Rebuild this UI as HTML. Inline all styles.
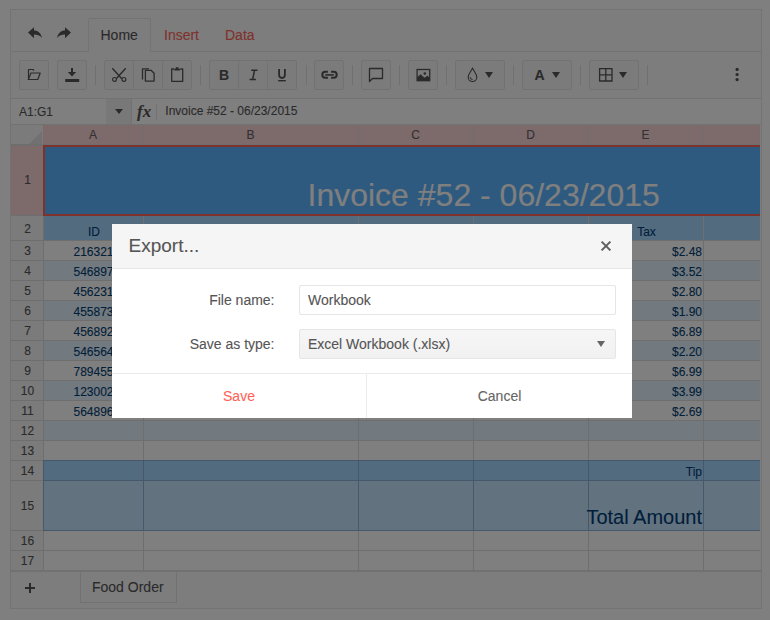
<!DOCTYPE html><html><head><meta charset="utf-8"><style>
*{box-sizing:border-box;margin:0;padding:0}
html,body{width:770px;height:620px;overflow:hidden;background:#fff;font-family:"Liberation Sans",sans-serif}
.abs{position:absolute}
#ss{position:absolute;left:10px;top:9px;width:752px;height:600px;border:1px solid #e6e6e6;background:#fafafa}
.tb{position:absolute;border:1px solid #e4e4e4;background:#f6f6f6;border-radius:2px}
.sep{position:absolute;width:1px;background:#e0e0e0;top:65px;height:20px}
.gl{position:absolute;background:#dcdcdc}
.txt{position:absolute;white-space:nowrap;line-height:1;-webkit-text-stroke:0.1px currentColor}
#ov{position:absolute;left:0;top:0;width:770px;height:620px;background:rgba(0,0,0,0.5)}
</style></head><body>
<div id="ss"></div>
<div class="abs" style="left:11px;top:51px;width:77px;height:1px;background:#e4e4e4"></div>
<div class="abs" style="left:151px;top:51px;width:610px;height:1px;background:#e4e4e4"></div>
<div class="abs" style="left:88px;top:18px;width:63px;height:34px;border:1px solid #e6e6e6;border-bottom:none;border-radius:2px 2px 0 0;background:#fafafa"></div>
<div class="txt" style="left:100.5px;top:28px;font-size:14px;color:#555">Home</div>
<div class="txt" style="left:164px;top:28px;font-size:14px;color:#ff6358">Insert</div>
<div class="txt" style="left:225px;top:28px;font-size:14px;color:#ff6358">Data</div>
<svg class="abs" style="left:27px;top:26px" width="16" height="14" viewBox="0 0 16 14"><path d="M1 6.5 L7 1.3 L7 4.6 C11 4.6 14 7.2 15 12 C13 9.3 10 8.6 7 8.6 L7 12.3 Z" fill="#555"/></svg>
<svg class="abs" style="left:56px;top:26px" width="16" height="14" viewBox="0 0 16 14"><path d="M15 6.5 L9 1.3 L9 4.6 C5 4.6 2 7.2 1 12 C3 9.3 6 8.6 9 8.6 L9 12.3 Z" fill="#555"/></svg>
<div class="abs" style="left:11px;top:98px;width:750px;height:1px;background:#e4e4e4"></div>
<div class="tb" style="left:19px;top:60px;width:30px;height:30px"></div>
<div class="tb" style="left:57px;top:60px;width:30px;height:30px"></div>
<div class="tb" style="left:104px;top:60px;width:88px;height:30px"></div>
<div class="tb" style="left:209px;top:60px;width:88px;height:30px"></div>
<div class="tb" style="left:314px;top:60px;width:30px;height:30px"></div>
<div class="tb" style="left:361px;top:60px;width:30px;height:30px"></div>
<div class="tb" style="left:408px;top:60px;width:30px;height:30px"></div>
<div class="tb" style="left:455px;top:60px;width:50px;height:30px"></div>
<div class="tb" style="left:522px;top:60px;width:50px;height:30px"></div>
<div class="tb" style="left:589px;top:60px;width:50px;height:30px"></div>
<div class="abs" style="left:133px;top:61px;width:1px;height:28px;background:#e4e4e4"></div>
<div class="abs" style="left:162px;top:61px;width:1px;height:28px;background:#e4e4e4"></div>
<div class="abs" style="left:238px;top:61px;width:1px;height:28px;background:#e4e4e4"></div>
<div class="abs" style="left:267px;top:61px;width:1px;height:28px;background:#e4e4e4"></div>
<div class="sep" style="left:95px"></div>
<div class="sep" style="left:200px"></div>
<div class="sep" style="left:306px"></div>
<div class="sep" style="left:352px"></div>
<div class="sep" style="left:399px"></div>
<div class="sep" style="left:446px"></div>
<div class="sep" style="left:513px"></div>
<div class="sep" style="left:580px"></div>
<div class="sep" style="left:647px"></div>
<svg class="abs" style="left:26px;top:68px" width="16" height="14" viewBox="0 0 16 14"><path d="M2.5 11.5V1.5h4.5l1 1" fill="none" stroke="#555" stroke-width="1.2" stroke-linejoin="round"/><path d="M5 5h9.2l-2.4 6.5H2.3z" fill="none" stroke="#555" stroke-width="1.2" stroke-linejoin="round"/></svg>
<svg class="abs" style="left:64px;top:67px" width="16" height="16" viewBox="0 0 16 16"><rect x="7" y="1" width="2" height="5" fill="#555"/><path d="M3.8 5h8.4l-4.2 4.5z" fill="#555"/><rect x="1.2" y="12" width="14" height="3" fill="#555"/></svg>
<svg class="abs" style="left:111px;top:67px" width="16" height="16" viewBox="0 0 16 16"><path d="M1.3 1.3l9.5 10.5M14.7 1.3l-9.5 10.5" stroke="#555" stroke-width="1.4"/><circle cx="3.5" cy="12.4" r="1.9" fill="#fafafa" stroke="#555" stroke-width="1.2"/><circle cx="12.9" cy="12.4" r="1.9" fill="#fafafa" stroke="#555" stroke-width="1.2"/></svg>
<svg class="abs" style="left:140px;top:67px" width="16" height="16" viewBox="0 0 16 16"><path d="M2.5 12.6V1.9h6.5" fill="none" stroke="#555" stroke-width="1.3" stroke-linejoin="round"/><path d="M5.4 3.3h5.7l3 3v7.8H5.4z" fill="none" stroke="#555" stroke-width="1.3" stroke-linejoin="round"/></svg>
<svg class="abs" style="left:169px;top:66px" width="16" height="17" viewBox="0 0 16 17"><path d="M5 3H2.7v12.4h11V3H11.3" fill="none" stroke="#555" stroke-width="1.3" stroke-linejoin="round"/><path d="M5.2 4.4h5.8V2.8H9.5V1.3h-2.8v1.5H5.2z" fill="#555"/></svg>
<div class="txt" style="left:219px;top:68px;font-size:14px;font-weight:bold;color:#555">B</div>
<svg class="abs" style="left:248px;top:68px" width="12" height="14" viewBox="0 0 12 14"><path d="M3.2 2.2h6.3M1.6 11.6h6.3M6.6 2.2l-2 9.4" fill="none" stroke="#555" stroke-width="1.5"/></svg>
<svg class="abs" style="left:276px;top:67px" width="12" height="16" viewBox="0 0 12 16"><path d="M3.1 2v5.8c0 2.2 1.2 3.2 2.9 3.2s2.9-1 2.9-3.2V2" fill="none" stroke="#555" stroke-width="1.8"/><rect x="2.2" y="13" width="7.6" height="1.4" fill="#555"/></svg>
<svg class="abs" style="left:321px;top:67px" width="17" height="16" viewBox="0 0 17 16"><path d="M6.9 4.8H4.3a3 3 0 0 0 0 6h2.6M10.1 4.8h2.6a3 3 0 0 1 0 6h-2.6" fill="none" stroke="#555" stroke-width="2"/><rect x="4.2" y="7.1" width="8.6" height="1.6" fill="#555"/></svg>
<svg class="abs" style="left:368px;top:67px" width="16" height="16" viewBox="0 0 16 16"><path d="M1.5 1.5h13v10h-10l-3 3z" fill="none" stroke="#555" stroke-width="1.3" stroke-linejoin="round"/></svg>
<svg class="abs" style="left:415px;top:67px" width="16" height="16" viewBox="0 0 16 16"><rect x="2.1" y="2.5" width="12.6" height="11.2" fill="none" stroke="#555" stroke-width="1.3"/><path d="M2 13.7V10.6L5.5 7.2 9.5 10.8 12.5 8.8 14.8 10.8V13.7z" fill="#555"/><circle cx="9.8" cy="6.5" r="1.3" fill="#555"/></svg>
<svg class="abs" style="left:466px;top:67px" width="14" height="16" viewBox="0 0 14 16"><path d="M6.5 1.3C4.8 4.6 2.2 7.2 2.2 10.2a4.3 4.3 0 0 0 8.6 0C10.8 7.2 8.2 4.6 6.5 1.3z" fill="none" stroke="#555" stroke-width="1.1"/><path d="M4.2 10.2a2.3 2.3 0 0 0 2.3 2.3" fill="none" stroke="#555" stroke-width="1"/></svg>
<svg class="abs" style="left:484.5px;top:72px" width="8" height="6" viewBox="0 0 8 6"><path d="M0 0h8l-4 6z" fill="#555"/></svg>
<div class="txt" style="left:534.5px;top:68px;font-size:14px;font-weight:bold;color:#555">A</div>
<svg class="abs" style="left:551.5px;top:72px" width="8" height="6" viewBox="0 0 8 6"><path d="M0 0h8l-4 6z" fill="#555"/></svg>
<svg class="abs" style="left:598px;top:67px" width="16" height="16" viewBox="0 0 16 16"><path d="M1.6 1.6h12.4v12.4H1.6z M7.8 1.6v12.4 M1.6 7.8h12.4" fill="none" stroke="#555" stroke-width="1.3"/></svg>
<svg class="abs" style="left:618.5px;top:72px" width="8" height="6" viewBox="0 0 8 6"><path d="M0 0h8l-4 6z" fill="#555"/></svg>
<svg class="abs" style="left:734px;top:66px" width="6" height="18" viewBox="0 0 6 18"><circle cx="3.1" cy="3.4" r="1.6" fill="#555"/><circle cx="3.1" cy="8.5" r="1.6" fill="#555"/><circle cx="3.1" cy="13.6" r="1.6" fill="#555"/></svg>
<div class="abs" style="left:11px;top:99px;width:750px;height:25px;background:#fff"></div>
<div class="abs" style="left:11px;top:124px;width:750px;height:1px;background:#e4e4e4"></div>
<div class="abs" style="left:106px;top:99px;width:25px;height:25px;background:#f0f0f0"></div>
<div class="abs" style="left:131px;top:99px;width:1px;height:25px;background:#e4e4e4"></div>
<div class="abs" style="left:156px;top:104px;width:1px;height:16px;background:#e4e4e4"></div>
<div class="txt" style="left:19px;top:106px;font-size:12px;color:#555">A1:G1</div>
<svg class="abs" style="left:115px;top:109px" width="8" height="6" viewBox="0 0 8 6"><path d="M0 0h8l-4 5z" fill="#555"/></svg>
<div class="txt" style="left:137px;top:103px;font-size:17px;font-style:italic;font-weight:bold;font-family:'Liberation Serif',serif;color:#555">fx</div>
<div class="txt" style="left:165.3px;top:105.3px;font-size:12px;color:#555">Invoice #52 - 06/23/2015</div>
<div class="abs" style="left:43px;top:145px;width:717px;height:425px;background:#fff"></div>
<div class="abs" style="left:43px;top:145px;width:717px;height:70px;background:#5eb4ff"></div>
<div class="abs" style="left:43px;top:215px;width:717px;height:25px;background:#a7d6ff"></div>
<div class="abs" style="left:43px;top:260px;width:717px;height:20px;background:#e5f3ff"></div>
<div class="abs" style="left:43px;top:300px;width:717px;height:20px;background:#e5f3ff"></div>
<div class="abs" style="left:43px;top:340px;width:717px;height:20px;background:#e5f3ff"></div>
<div class="abs" style="left:43px;top:380px;width:717px;height:20px;background:#e5f3ff"></div>
<div class="abs" style="left:43px;top:420px;width:717px;height:20px;background:#e5f3ff"></div>
<div class="abs" style="left:43px;top:460px;width:717px;height:20px;background:#a7d6ff"></div>
<div class="abs" style="left:43px;top:480px;width:717px;height:50px;background:#c7e4ff"></div>
<div class="abs" style="left:11px;top:125px;width:32px;height:20px;background:#f6f6f6"></div>
<div class="abs" style="left:43px;top:125px;width:717px;height:20px;background:#fbd4d6"></div>
<div class="abs" style="left:11px;top:145px;width:32px;height:425px;background:#f6f6f6"></div>
<div class="abs" style="left:11px;top:145px;width:32px;height:70px;background:#fbd4d6"></div>
<svg class="abs" style="left:29px;top:131px" width="13" height="13" viewBox="0 0 13 13"><path d="M13 0V13H0z" fill="#e2e2e2"/></svg>
<div class="gl" style="left:143px;top:125px;width:1px;height:20px"></div>
<div class="gl" style="left:143px;top:215px;width:1px;height:355px"></div>
<div class="gl" style="left:358px;top:125px;width:1px;height:20px"></div>
<div class="gl" style="left:358px;top:215px;width:1px;height:355px"></div>
<div class="gl" style="left:473px;top:125px;width:1px;height:20px"></div>
<div class="gl" style="left:473px;top:215px;width:1px;height:355px"></div>
<div class="gl" style="left:588px;top:125px;width:1px;height:20px"></div>
<div class="gl" style="left:588px;top:215px;width:1px;height:355px"></div>
<div class="gl" style="left:703px;top:125px;width:1px;height:20px"></div>
<div class="gl" style="left:703px;top:215px;width:1px;height:355px"></div>
<div class="gl" style="left:43px;top:215px;width:1px;height:355px"></div>
<div class="gl" style="left:11px;top:145px;width:749px;height:1px"></div>
<div class="gl" style="left:11px;top:215px;width:749px;height:1px"></div>
<div class="gl" style="left:11px;top:240px;width:749px;height:1px"></div>
<div class="gl" style="left:11px;top:260px;width:749px;height:1px"></div>
<div class="gl" style="left:11px;top:280px;width:749px;height:1px"></div>
<div class="gl" style="left:11px;top:300px;width:749px;height:1px"></div>
<div class="gl" style="left:11px;top:320px;width:749px;height:1px"></div>
<div class="gl" style="left:11px;top:340px;width:749px;height:1px"></div>
<div class="gl" style="left:11px;top:360px;width:749px;height:1px"></div>
<div class="gl" style="left:11px;top:380px;width:749px;height:1px"></div>
<div class="gl" style="left:11px;top:400px;width:749px;height:1px"></div>
<div class="gl" style="left:11px;top:420px;width:749px;height:1px"></div>
<div class="gl" style="left:11px;top:440px;width:749px;height:1px"></div>
<div class="gl" style="left:11px;top:460px;width:749px;height:1px"></div>
<div class="gl" style="left:11px;top:480px;width:749px;height:1px"></div>
<div class="gl" style="left:11px;top:530px;width:749px;height:1px"></div>
<div class="gl" style="left:11px;top:550px;width:749px;height:1px"></div>
<div class="gl" style="left:11px;top:570px;width:749px;height:1px"></div>
<div class="gl" style="left:11px;top:144px;width:749px;height:1px"></div>
<div class="abs" style="left:43px;top:460px;width:717px;height:1px;background:#8db3d8"></div>
<div class="abs" style="left:43px;top:480px;width:717px;height:1px;background:#8db3d8"></div>
<div class="abs" style="left:43px;top:530px;width:717px;height:1px;background:#8db3d8"></div>
<div class="abs" style="left:43px;top:460px;width:1px;height:71px;background:#8db3d8"></div>
<div class="abs" style="left:143px;top:460px;width:1px;height:71px;background:#8db3d8"></div>
<div class="abs" style="left:358px;top:460px;width:1px;height:71px;background:#8db3d8"></div>
<div class="abs" style="left:473px;top:460px;width:1px;height:71px;background:#8db3d8"></div>
<div class="abs" style="left:588px;top:460px;width:1px;height:71px;background:#8db3d8"></div>
<div class="abs" style="left:703px;top:460px;width:1px;height:71px;background:#8db3d8"></div>
<div class="txt" style="left:43px;width:100px;text-align:center;top:129px;font-size:12px;color:#656565">A</div>
<div class="txt" style="left:143px;width:215px;text-align:center;top:129px;font-size:12px;color:#656565">B</div>
<div class="txt" style="left:358px;width:115px;text-align:center;top:129px;font-size:12px;color:#656565">C</div>
<div class="txt" style="left:473px;width:115px;text-align:center;top:129px;font-size:12px;color:#656565">D</div>
<div class="txt" style="left:588px;width:115px;text-align:center;top:129px;font-size:12px;color:#656565">E</div>
<div class="txt" style="left:11.5px;width:32px;text-align:center;top:174.0px;font-size:12px;color:#555">1</div>
<div class="txt" style="left:11.5px;width:32px;text-align:center;top:222.5px;font-size:12px;color:#555">2</div>
<div class="txt" style="left:11.5px;width:32px;text-align:center;top:245.0px;font-size:12px;color:#555">3</div>
<div class="txt" style="left:11.5px;width:32px;text-align:center;top:265.0px;font-size:12px;color:#555">4</div>
<div class="txt" style="left:11.5px;width:32px;text-align:center;top:285.0px;font-size:12px;color:#555">5</div>
<div class="txt" style="left:11.5px;width:32px;text-align:center;top:305.0px;font-size:12px;color:#555">6</div>
<div class="txt" style="left:11.5px;width:32px;text-align:center;top:325.0px;font-size:12px;color:#555">7</div>
<div class="txt" style="left:11.5px;width:32px;text-align:center;top:345.0px;font-size:12px;color:#555">8</div>
<div class="txt" style="left:11.5px;width:32px;text-align:center;top:365.0px;font-size:12px;color:#555">9</div>
<div class="txt" style="left:11.5px;width:32px;text-align:center;top:385.0px;font-size:12px;color:#555">10</div>
<div class="txt" style="left:11.5px;width:32px;text-align:center;top:405.0px;font-size:12px;color:#555">11</div>
<div class="txt" style="left:11.5px;width:32px;text-align:center;top:425.0px;font-size:12px;color:#555">12</div>
<div class="txt" style="left:11.5px;width:32px;text-align:center;top:445.0px;font-size:12px;color:#555">13</div>
<div class="txt" style="left:11.5px;width:32px;text-align:center;top:465.0px;font-size:12px;color:#555">14</div>
<div class="txt" style="left:11.5px;width:32px;text-align:center;top:500.0px;font-size:12px;color:#555">15</div>
<div class="txt" style="left:11.5px;width:32px;text-align:center;top:535.0px;font-size:12px;color:#555">16</div>
<div class="txt" style="left:11.5px;width:32px;text-align:center;top:555.0px;font-size:12px;color:#555">17</div>
<div class="txt" style="left:44px;width:100px;text-align:center;top:226px;font-size:12px;color:#003e75">ID</div>
<div class="txt" style="left:589px;width:115px;text-align:center;top:226px;font-size:12px;color:#003e75">Tax</div>
<div class="txt" style="left:43.5px;width:100px;text-align:center;top:246px;font-size:12px;color:#003e75">216321</div>
<div class="txt" style="left:589px;width:113px;text-align:right;top:246px;font-size:12px;color:#003e75">$2.48</div>
<div class="txt" style="left:43.5px;width:100px;text-align:center;top:266px;font-size:12px;color:#003e75">546897</div>
<div class="txt" style="left:589px;width:113px;text-align:right;top:266px;font-size:12px;color:#003e75">$3.52</div>
<div class="txt" style="left:43.5px;width:100px;text-align:center;top:286px;font-size:12px;color:#003e75">456231</div>
<div class="txt" style="left:589px;width:113px;text-align:right;top:286px;font-size:12px;color:#003e75">$2.80</div>
<div class="txt" style="left:43.5px;width:100px;text-align:center;top:306px;font-size:12px;color:#003e75">455873</div>
<div class="txt" style="left:589px;width:113px;text-align:right;top:306px;font-size:12px;color:#003e75">$1.90</div>
<div class="txt" style="left:43.5px;width:100px;text-align:center;top:326px;font-size:12px;color:#003e75">456892</div>
<div class="txt" style="left:589px;width:113px;text-align:right;top:326px;font-size:12px;color:#003e75">$6.89</div>
<div class="txt" style="left:43.5px;width:100px;text-align:center;top:346px;font-size:12px;color:#003e75">546564</div>
<div class="txt" style="left:589px;width:113px;text-align:right;top:346px;font-size:12px;color:#003e75">$2.20</div>
<div class="txt" style="left:43.5px;width:100px;text-align:center;top:366px;font-size:12px;color:#003e75">789455</div>
<div class="txt" style="left:589px;width:113px;text-align:right;top:366px;font-size:12px;color:#003e75">$6.99</div>
<div class="txt" style="left:43.5px;width:100px;text-align:center;top:386px;font-size:12px;color:#003e75">123002</div>
<div class="txt" style="left:589px;width:113px;text-align:right;top:386px;font-size:12px;color:#003e75">$3.99</div>
<div class="txt" style="left:43.5px;width:100px;text-align:center;top:406px;font-size:12px;color:#003e75">564896</div>
<div class="txt" style="left:589px;width:113px;text-align:right;top:406px;font-size:12px;color:#003e75">$2.69</div>
<div class="txt" style="left:588px;width:114px;text-align:right;top:466px;font-size:12px;color:#003e75">Tip</div>
<div class="txt" style="left:488px;width:214px;text-align:right;top:507px;font-size:20px;color:#003e75">Total Amount</div>
<div class="txt" style="left:307.5px;top:178.5px;font-size:32px;color:#ffffff">Invoice #52 - 06/23/2015</div>
<div class="abs" style="left:43px;top:145px;width:717px;height:71px;border:2px solid #ff6358;border-right:none"></div>
<div class="abs" style="left:11px;top:571px;width:750px;height:37px;background:#fafafa"></div>
<div class="abs" style="left:11px;top:570px;width:750px;height:2px;background:#e2e2e2"></div>
<div class="abs" style="left:80px;top:572px;width:97px;height:31px;border:1px solid #e4e4e4;border-top:none;background:#fafafa"></div>
<div class="txt" style="left:92px;top:580px;font-size:14px;color:#555">Food Order</div>
<svg class="abs" style="left:24.3px;top:582px" width="12" height="12" viewBox="0 0 12 12"><path d="M6 1v10M1 6h10" stroke="#555" stroke-width="2"/></svg>
<div id="ov"></div>
<div class="abs" style="left:112px;top:224px;width:520px;height:194px;background:#fff;">
<div class="abs" style="left:0;top:0;width:520px;height:45px;background:#f5f5f5;border-bottom:1px solid #e6e6e6"></div>
<div class="txt" style="left:16.5px;top:11.5px;font-size:19px;color:#555">Export...</div>
<svg class="abs" style="left:488px;top:16px" width="12" height="12" viewBox="0 0 12 12"><path d="M1.6 1.6l8.8 8.8M10.4 1.6l-8.8 8.8" stroke="#5e5e5e" stroke-width="2"/></svg>
<div class="txt" style="left:0.5px;width:162px;text-align:right;top:69px;font-size:14px;color:#555">File name:</div>
<div class="txt" style="left:0.5px;width:162px;text-align:right;top:113px;font-size:14px;color:#555">Save as type:</div>
<div class="abs" style="left:187px;top:61px;width:317px;height:30px;border:1px solid #e6e6e6;border-radius:2px;background:#fff"></div>
<div class="txt" style="left:196px;top:69px;font-size:14px;color:#555">Workbook</div>
<div class="abs" style="left:187px;top:105px;width:317px;height:30px;border:1px solid #e6e6e6;border-radius:2px;background:linear-gradient(#f6f6f6,#f1f1f1)"></div>
<div class="txt" style="left:196px;top:113px;font-size:14px;color:#555">Excel Workbook (.xlsx)</div>
<svg class="abs" style="left:485px;top:117px" width="8" height="6" viewBox="0 0 8 6"><path d="M0 0h8l-4 6z" fill="#656565"/></svg>
<div class="abs" style="left:0;top:149px;width:520px;height:1px;background:#ececec"></div>
<div class="abs" style="left:254px;top:150px;width:1px;height:44px;background:#ececec"></div>
<div class="txt" style="left:0;width:254px;text-align:center;top:165px;font-size:14px;color:#ff6358">Save</div>
<div class="txt" style="left:255px;width:265px;text-align:center;top:165px;font-size:14px;color:#656565">Cancel</div>
</div>
</body></html>
